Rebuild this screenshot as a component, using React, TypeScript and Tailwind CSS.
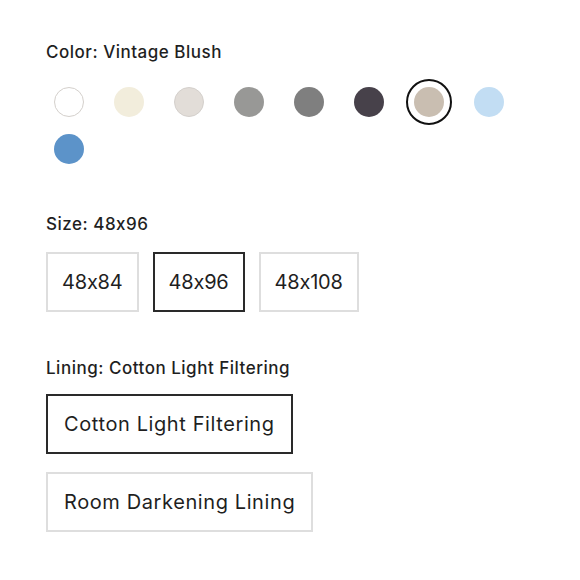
import React, { useState } from 'react';

interface Swatch {
  name: string;
  bg: string;
  bordered?: boolean;
}

const swatches: Swatch[] = [
  { name: 'White', bg: 'bg-white', bordered: true },
  { name: 'Ivory', bg: 'bg-[#f2eddc]' },
  { name: 'Dove', bg: 'bg-[#e2ddd8]', bordered: true },
  { name: 'Stone', bg: 'bg-[#989896]' },
  { name: 'Slate', bg: 'bg-[#7f7f7f]' },
  { name: 'Charcoal', bg: 'bg-[#47414a]' },
  { name: 'Vintage Blush', bg: 'bg-[#c9beb1]' },
  { name: 'Sky', bg: 'bg-[#c2ddf3]' },
  { name: 'Cornflower', bg: 'bg-[#5c93c9]' },
];

const sizes = ['48x84', '48x96', '48x108'];
const linings = ['Cotton Light Filtering', 'Room Darkening Lining'];

export default function App() {
  const [color, setColor] = useState('Vintage Blush');
  const [size, setSize] = useState('48x96');
  const [lining, setLining] = useState('Cotton Light Filtering');

  return (
    <div className="w-[580px] h-[580px] bg-white text-[#1f1f1f] pl-[46px] pr-[46px] pt-[40px] font-['Inter','Liberation_Sans',sans-serif] [font-feature-settings:'calt'_0]">
      {/* Color */}
      <div className="text-[17px] leading-6 font-medium tracking-[0.03em]">Color: {color}</div>
      <div className="mt-[15px] flex flex-wrap gap-x-[14px] gap-y-px">
        {swatches.map((s) => (
          <button
            key={s.name}
            onClick={() => setColor(s.name)}
            className={`w-[46px] h-[46px] rounded-full flex items-center justify-center ${
              color === s.name ? 'border-2 border-[#111]' : 'border-2 border-transparent'
            }`}
          >
            <span
              className={`block w-[30px] h-[30px] rounded-full ${s.bg} ${
                s.bordered ? 'border border-[#d4d0cc]' : ''
              }`}
            />
          </button>
        ))}
      </div>

      {/* Size */}
      <div className="mt-10 text-[17px] leading-6 font-medium tracking-[0.03em]">Size: {size}</div>
      <div className="mt-4 flex gap-[14px]">
        {sizes.map((s) => (
          <button
            key={s}
            onClick={() => setSize(s)}
            className={`h-[60px] px-[14px] text-xl tracking-[-0.01em] ${
              size === s ? 'border-2 border-[#2a2a2a]' : 'border-2 border-[#dedede]'
            }`}
          >
            {s}
          </button>
        ))}
      </div>

      {/* Lining */}
      <div className="mt-11 text-[17px] leading-6 font-medium tracking-[0.03em]">Lining: {lining}</div>
      <div className="mt-[14px] flex flex-col items-start gap-[18px]">
        {linings.map((l) => (
          <button
            key={l}
            onClick={() => setLining(l)}
            className={`h-[60px] px-4 text-xl tracking-[0.03em] ${
              lining === l ? 'border-2 border-[#2a2a2a]' : 'border-2 border-[#dedede]'
            }`}
          >
            {l}
          </button>
        ))}
      </div>
    </div>
  );
}
